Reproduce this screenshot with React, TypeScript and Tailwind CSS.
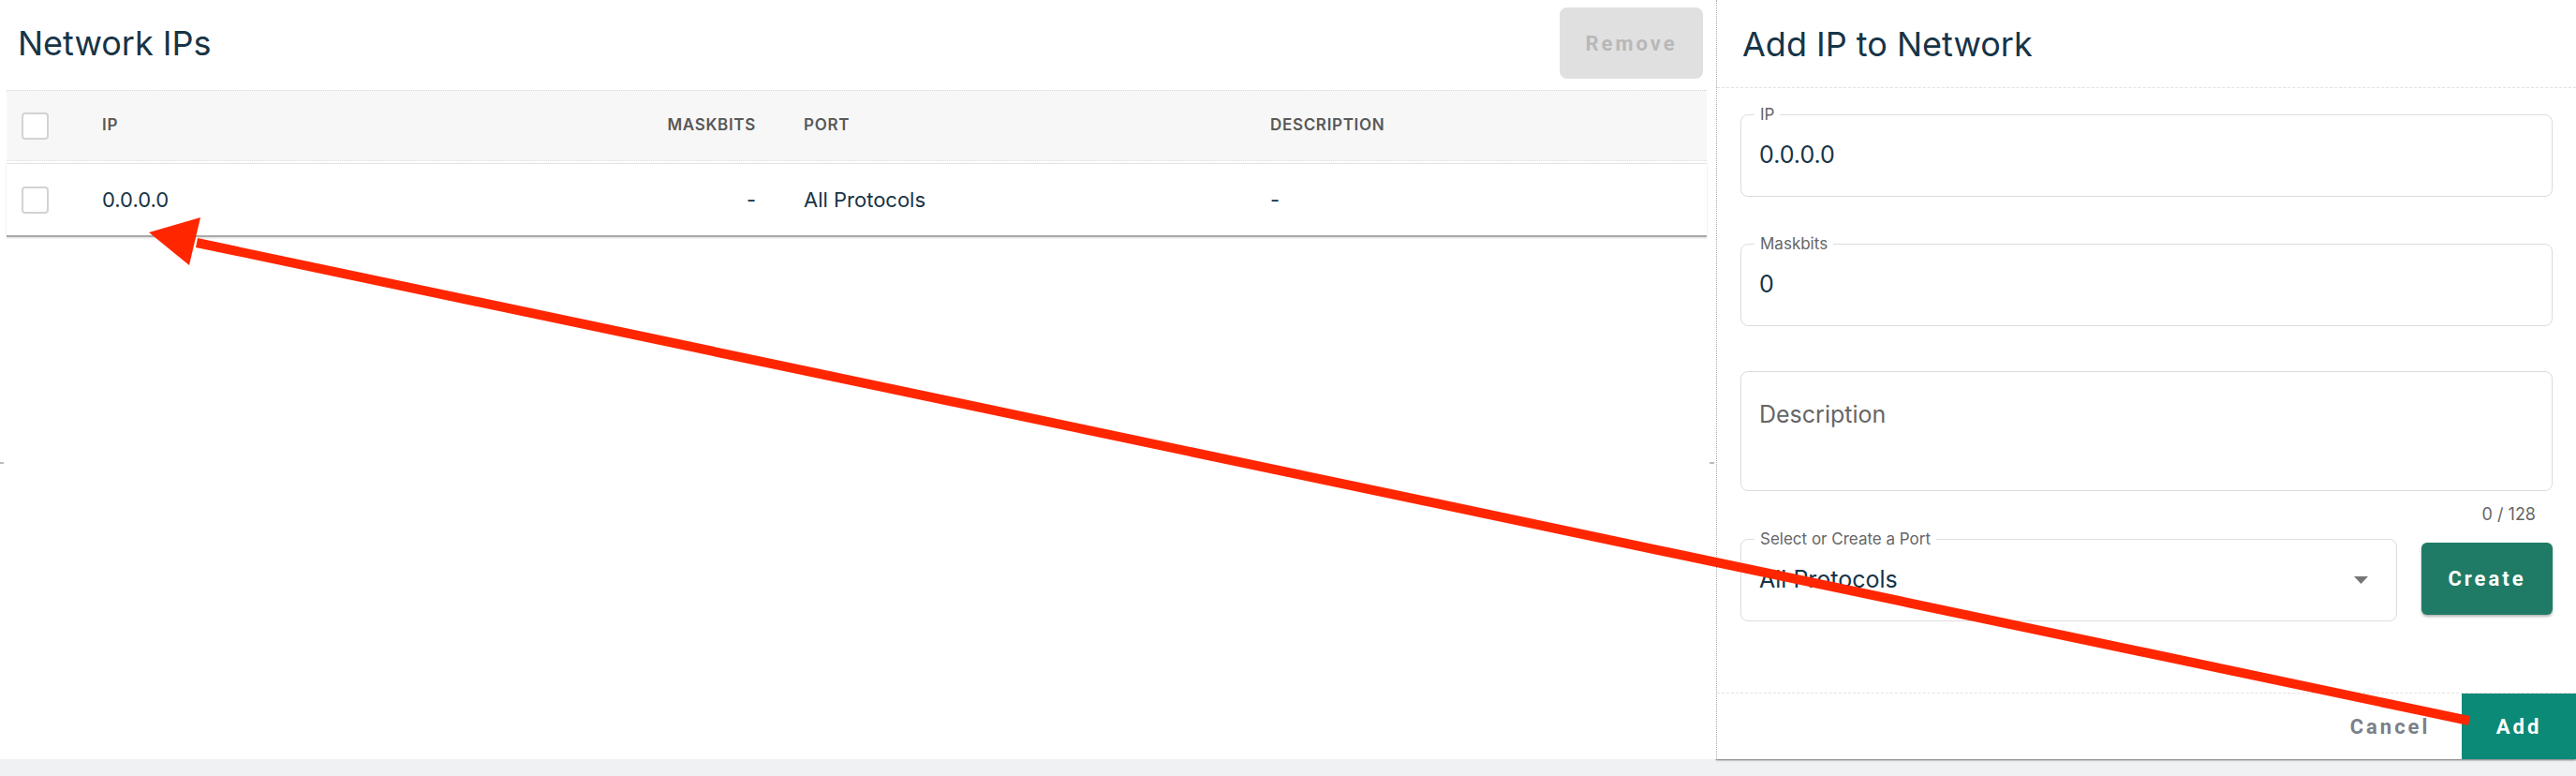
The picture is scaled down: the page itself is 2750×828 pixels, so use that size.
import React from "react";

const NAVY = "text-[#173447]";

function Checkbox() {
  return <div className="h-[29px] w-[29px] rounded-[4px] border-2 border-[#d3d3d3] bg-white" />;
}

function OutlinedField({
  label,
  className,
  children,
}: {
  label?: string;
  className?: string;
  children?: React.ReactNode;
}) {
  return (
    <div className={`relative rounded-[8px] border border-[#dcdcdc] ${className ?? ""}`}>
      {label && (
        <span className="absolute -top-[12px] left-[14px] bg-white px-[6px] text-[17px] leading-[22px] text-[#666]">
          {label}
        </span>
      )}
      {children}
    </div>
  );
}

// annotation arrow drawn over the screenshot
function Arrow() {
  return (
    <svg className="pointer-events-none absolute left-0 top-0" width={2750} height={828}>
      <line x1={2636} y1={769} x2={210} y2={259} stroke="#ff2600" strokeWidth={10} />
      <polygon points="159,248 214,232 202,283" fill="#ff2600" />
    </svg>
  );
}

export default function App() {
  return (
    <div className="relative h-[828px] w-[2750px] overflow-hidden bg-[#f0f1f3] font-['Inter',sans-serif]">
      <div className="flex h-[810px]">
        {/* left: table */}
        <div className="relative flex flex-1 flex-col bg-white">
          <div className="flex h-[92px] items-center justify-between pl-[19px] pr-[14px]">
            <h1 className={`text-[36px] font-normal leading-none ${NAVY}`}>Network IPs</h1>
            <button className="h-[76px] w-[153px] rounded-[8px] bg-[#e0e0e0] font-['Roboto',sans-serif] text-[22px] font-bold tracking-[3px] text-[#b8b8b8]">
              Remove
            </button>
          </div>
          <div className="ml-[7px] mr-[10px] mt-[4px]">
            <div className="flex h-[76px] items-center border-t border-b border-dotted border-t-[#d6d6d6] border-b-[#dedede] bg-[#f7f7f7] text-[17px] font-semibold tracking-[0.04em] text-[#585858]">
              <div className="w-[102px] pl-[16px]">
                <Checkbox />
              </div>
              <div className="w-[498px]">IP</div>
              <div className="w-[200px] text-right">MASKBITS</div>
              <div className="w-[549px] pl-[51px]">PORT</div>
              <div className="flex-1">DESCRIPTION</div>
            </div>
            <div className="h-[2px]" />
            <div
              className={`flex h-[79px] items-center border-t border-b-2 border-t-[#e2e2e2] border-b-[#a9a9a9] text-[22px] shadow-[0_1px_2px_rgba(0,0,0,0.15)] ${NAVY}`}
            >
              <div className="w-[102px] pl-[16px]">
                <Checkbox />
              </div>
              <div className="w-[498px]">0.0.0.0</div>
              <div className="w-[200px] text-right">-</div>
              <div className="w-[549px] pl-[51px]">All Protocols</div>
              <div className="flex-1">-</div>
            </div>
          </div>
          <div className="absolute left-0 top-[493px] h-[2px] w-[4px] bg-[#bcbcbc]" />
          <div className="absolute right-[2px] top-[493px] h-[2px] w-[5px] bg-[#bcbcbc]" />
        </div>

        {/* right: add form */}
        <div className="flex w-[918px] flex-col border-l border-dotted border-l-[#aaaaaa] bg-white shadow-[0_1px_2px_rgba(0,0,0,0.55)]">
          <div className="flex h-[94px] items-center border-b border-dashed border-b-[#e2e2e2] pl-[27px]">
            <h2 className={`text-[36px] font-normal leading-none ${NAVY}`}>Add IP to Network</h2>
          </div>
          <div className="flex flex-col pl-[25px] pr-[25px]">
            <OutlinedField label="IP" className="mt-[28px] flex h-[88px] items-center pl-[19px]">
              <span className={`text-[25px] ${NAVY}`}>0.0.0.0</span>
            </OutlinedField>
            <OutlinedField label="Maskbits" className="mt-[50px] flex h-[88px] items-center pl-[19px]">
              <span className={`text-[25px] ${NAVY}`}>0</span>
            </OutlinedField>
            <OutlinedField className="mt-[48px] h-[128px] pl-[19px] pt-[27px]">
              <span className="text-[25px] text-[#666]">Description</span>
            </OutlinedField>
            <div className="mt-[13px] pr-[18px] text-right text-[18px] leading-[24px] text-[#666]">0 / 128</div>
            <div className="mt-[14px] flex items-start gap-[26px]">
              <OutlinedField
                label="Select or Create a Port"
                className="flex h-[88px] flex-1 items-center justify-between pl-[19px] pr-[30px]"
              >
                <span className={`text-[25px] ${NAVY}`}>All Protocols</span>
                <svg width={15} height={8} viewBox="0 0 15 8">
                  <polygon points="0,0 15,0 7.5,8" fill="#757575" />
                </svg>
              </OutlinedField>
              <button className="mt-[4px] h-[77px] w-[140px] rounded-[6px] bg-[#1f7b65] font-['Roboto',sans-serif] text-[22px] font-bold tracking-[3px] text-white shadow-[0_2px_3px_rgba(0,0,0,0.3)]">
                Create
              </button>
            </div>
          </div>
          <div className="flex-1" />
          <div className="flex h-[71px] justify-end border-t border-dashed border-t-[#e2e2e2] font-['Roboto',sans-serif] text-[22px] font-bold tracking-[3px]">
            <button className="w-[153px] text-[#7b8089]">Cancel</button>
            <button className="w-[122px] bg-[#0b8a78] text-white">Add</button>
          </div>
        </div>
      </div>
      <Arrow />
    </div>
  );
}
